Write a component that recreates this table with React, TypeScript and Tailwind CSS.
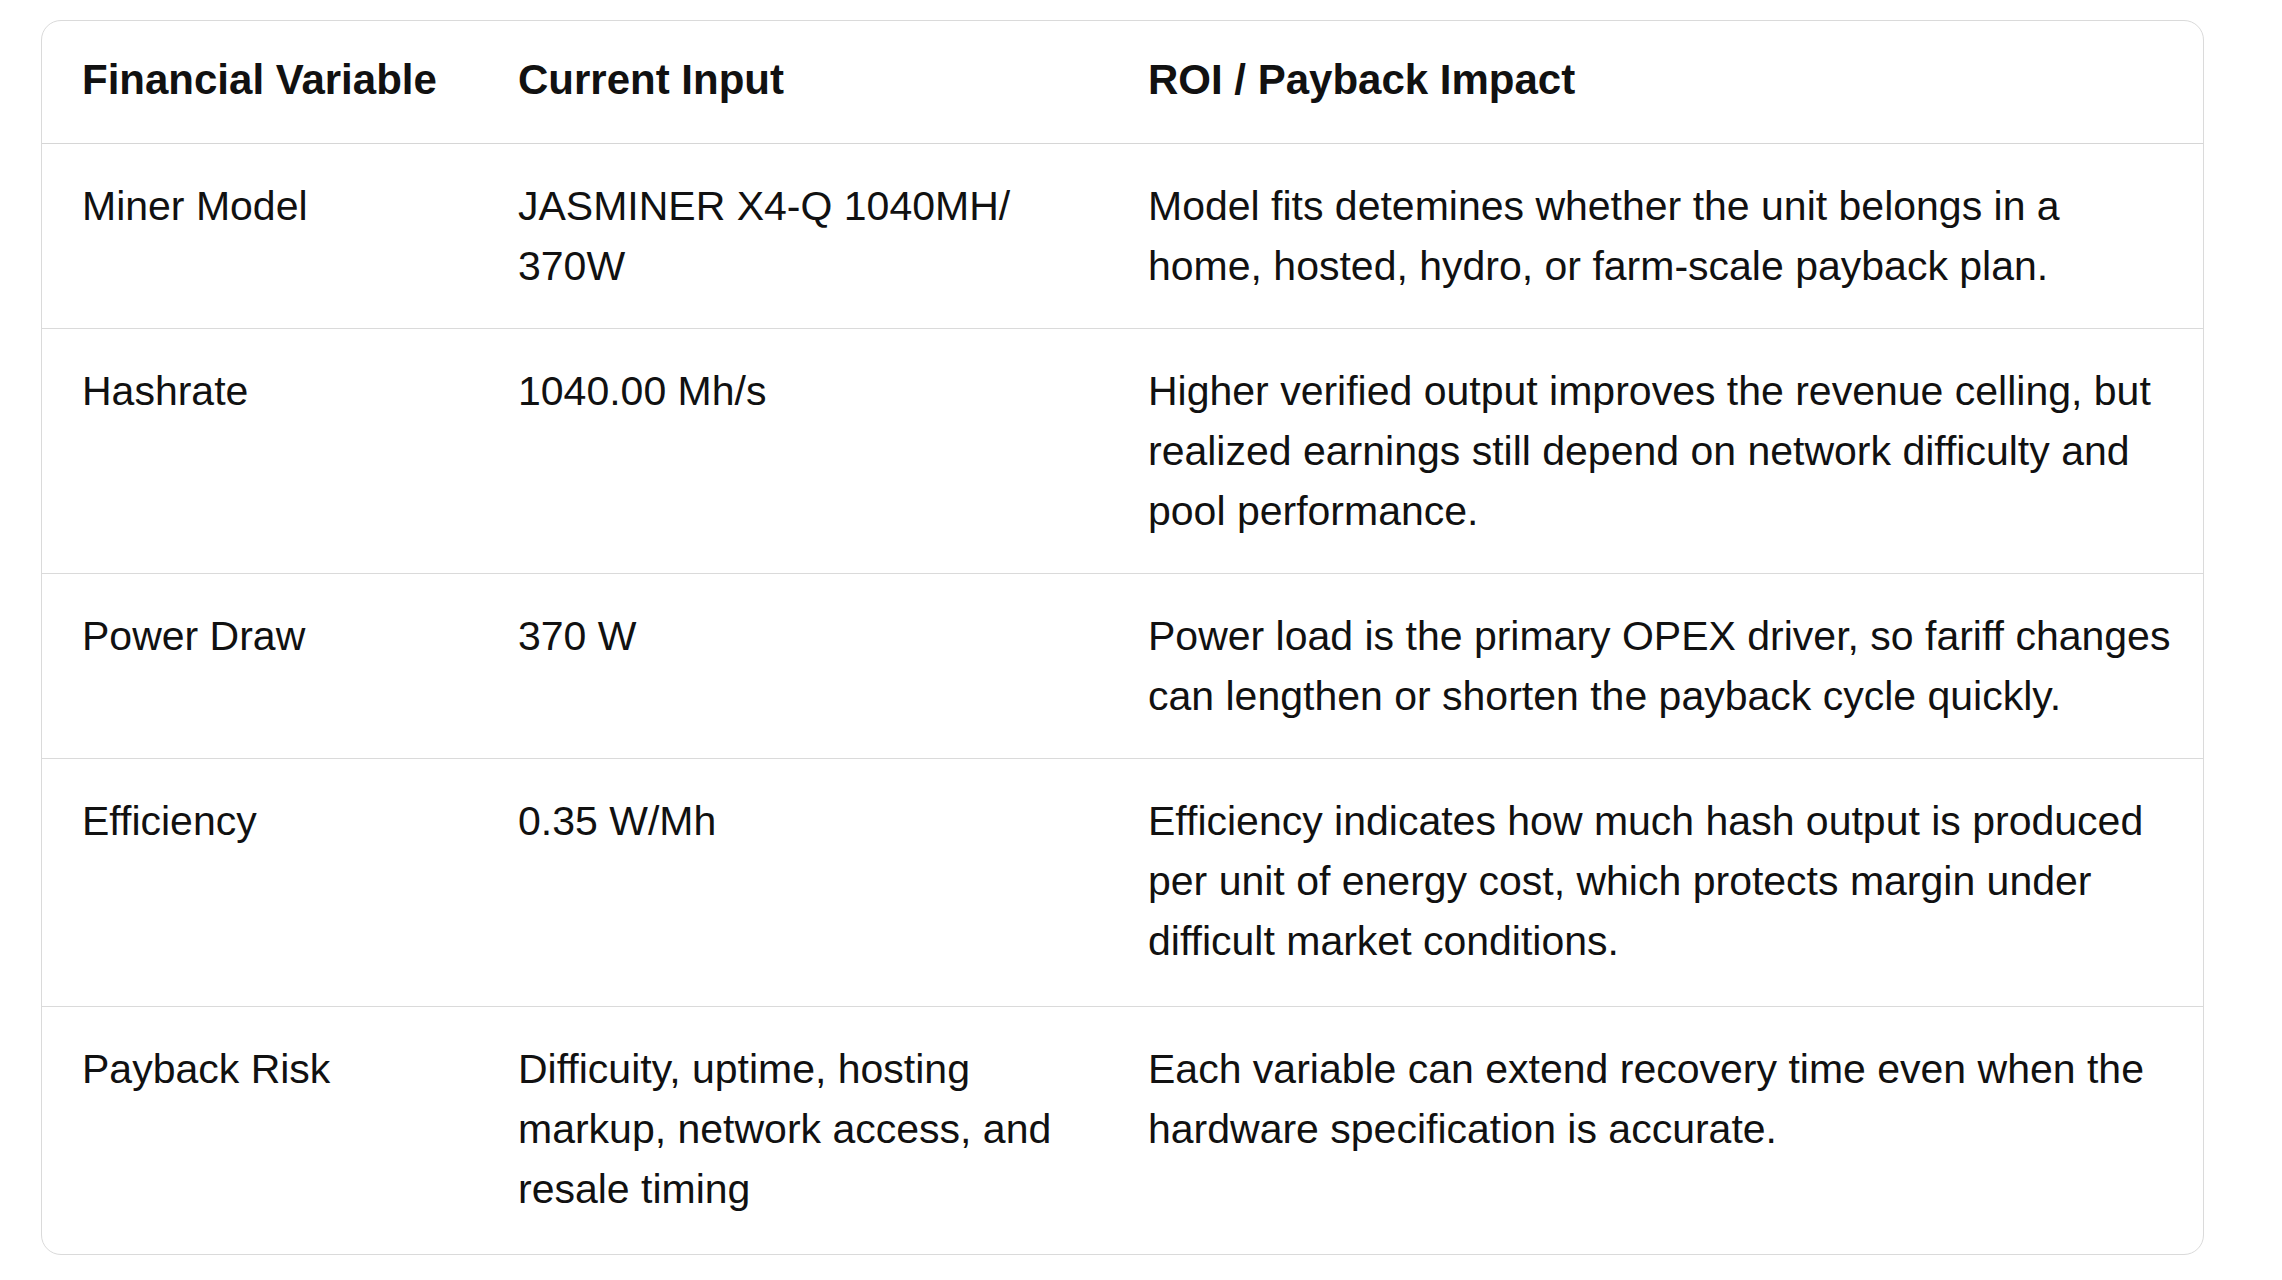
// ROI / payback comparison table for a single miner model.

type Row = {
  variable: string;
  input: React.ReactNode;
  impact: string;
  tall?: boolean;
};

const ROWS: Row[] = [
  {
    variable: "Miner Model",
    input: (
      <>
        JASMINER X4-Q 1040MH/<wbr />370W
      </>
    ),
    impact:
      "Model fits detemines whether the unit belongs in a home, hosted, hydro, or farm-scale payback plan.",
  },
  {
    variable: "Hashrate",
    input: "1040.00 Mh/s",
    impact:
      "Higher verified output improves the revenue celling, but realized earnings still depend on network difficulty and pool performance.",
  },
  {
    variable: "Power Draw",
    input: "370 W",
    impact:
      "Power load is the primary OPEX driver, so fariff changes can lengthen or shorten the payback cycle quickly.",
  },
  {
    variable: "Efficiency",
    input: "0.35 W/Mh",
    impact:
      "Efficiency indicates how much hash output is produced per unit of energy cost, which protects margin under difficult market conditions.",
    tall: true,
  },
  {
    variable: "Payback Risk",
    input: "Difficuity, uptime, hosting markup, network access, and resale timing",
    impact:
      "Each variable can extend recovery time even when the hardware specification is accurate.",
    tall: true,
  },
];

const GRID = "grid grid-cols-[436px_630px_1fr]";

export default function App() {
  return (
    <div className="min-h-screen bg-white pl-[41px] pt-[20px] font-['Liberation_Sans',Arial,sans-serif] text-[41px] leading-[60px] text-[#111]">
      <div className="w-[2163px] overflow-hidden rounded-[20px] border border-[#dadada] bg-white">
        {/* Header */}
        <div className={`${GRID} border-b border-[#d6d6d6] text-[42px] font-bold`}>
          <div className="pt-[29px] pb-[33px] px-10">Financial Variable</div>
          <div className="pt-[29px] pb-[33px] px-10">Current Input</div>
          <div className="pt-[29px] pb-[33px] pl-10 pr-[26px]">ROI / Payback Impact</div>
        </div>

        {ROWS.map((row, i) => (
          <div
            key={row.variable}
            className={`${GRID} ${i < ROWS.length - 1 ? "border-b border-[#dadada]" : ""} ${
              row.tall ? "pb-[3px]" : ""
            }`}
          >
            <div className="px-10 py-8">{row.variable}</div>
            <div className="px-10 py-8">{row.input}</div>
            <div className="py-8 pl-10 pr-[26px]">{row.impact}</div>
          </div>
        ))}
      </div>
    </div>
  );
}
